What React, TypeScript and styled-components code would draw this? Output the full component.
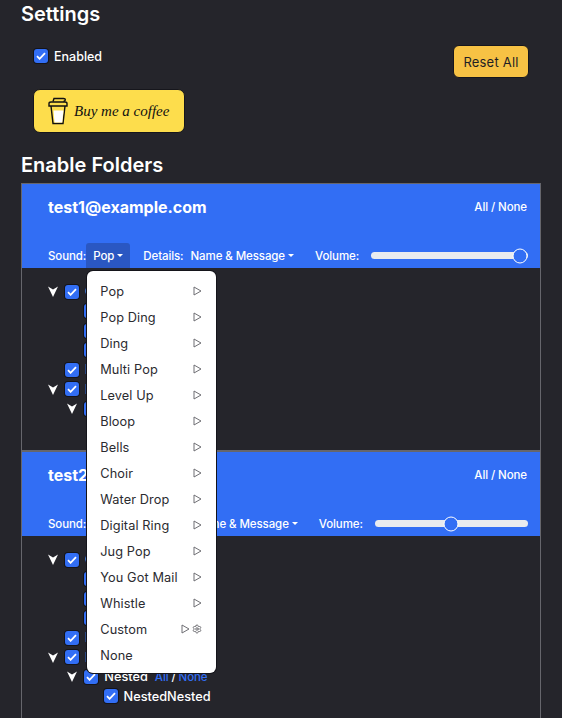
import React from 'react';
import styled, { createGlobalStyle } from 'styled-components';
import { Settings as GearIcon } from 'lucide-react';

const GlobalStyle = createGlobalStyle`
  html, body {
    margin: 0;
    padding: 0;
    height: 718px;
    overflow: hidden;
    background-color: #25252b;
  }
  body {
    font-family: Inter, "Liberation Sans", sans-serif;
    color: #fff;
    -webkit-font-smoothing: antialiased;
  }
`;

const Page = styled.div`
  padding: 2px 21px 0;
  height: 716px;
  overflow: hidden;
`;

const Heading = styled.h1`
  margin: 0;
  font-size: 20px;
  line-height: 24px;
  font-weight: 600;
`;

const SettingsRow = styled.div`
  display: flex;
  justify-content: space-between;
  align-items: flex-start;
  margin-top: 19px;
  padding: 0 12px 0 13px;
`;

const EnabledLabel = styled.label`
  display: flex;
  align-items: center;
  gap: 6px;
  height: 22px;
  font-size: 12.5px;
  font-weight: 500;
`;

const ResetButton = styled.button`
  width: 76px;
  height: 33px;
  padding: 0;
  border: 1px solid #16161c;
  border-radius: 6px;
  background-color: #f7c244;
  color: #1f1f24;
  font-family: inherit;
  font-size: 13px;
  letter-spacing: 0.2px;
`;

const CoffeeButton = styled.a`
  display: flex;
  align-items: center;
  gap: 6px;
  box-sizing: border-box;
  width: 152px;
  height: 44px;
  margin: 11px 0 0 12px;
  padding-left: 14px;
  border: 1px solid #16161c;
  border-radius: 7px;
  background-color: #fddd4c;
  color: #111;
  font-family: "Liberation Serif", serif;
  font-style: italic;
  font-size: 15px;
`;

const FoldersHeading = styled(Heading)`
  margin: 20px 0 6px;
`;

const Panel = styled.div`
  border: 1px solid #66666c;
  border-bottom: none;
  height: 600px;
`;

const AccountHeader = styled.div<{ $first?: boolean }>`
  height: 84px;
  padding: 0 13px 0 26px;
  background-color: #326ef4;
  border-top: ${(p) => (p.$first ? 'none' : '2px solid #66666c')};
  display: flex;
  flex-direction: column;
  font-size: 11.5px;
  font-weight: 500;
  letter-spacing: -0.1px;
`;

const TitleRow = styled.div`
  display: flex;
  justify-content: space-between;
  align-items: center;
  height: 46px;
`;

const AccountTitle = styled.span`
  font-size: 16px;
  font-weight: 700;
  letter-spacing: 0;
`;

const AllNone = styled.span`
  font-size: 11.5px;
`;

const ControlRow = styled.div`
  display: flex;
  align-items: center;
  height: 25px;
  margin-top: 13px;
`;

const DropdownWrap = styled.div`
  position: relative;
  margin: 0 13px 0 0;
`;

const DropdownButton = styled.div<{ $open?: boolean }>`
  display: flex;
  align-items: center;
  gap: 3px;
  height: 25px;
  padding: 0 ${(p) => (p.$open ? '7px' : '0')};
  border-radius: 3px 3px 0 0;
  background-color: ${(p) => (p.$open ? '#2a57c2' : 'transparent')};
  white-space: nowrap;
`;

const DetailsValue = styled(DropdownButton)`
  margin: 0 21px 0 7px;
`;

const Caret = styled.span`
  width: 0;
  height: 0;
  border-left: 3.5px solid transparent;
  border-right: 3.5px solid transparent;
  border-top: 3.5px solid #fff;
`;

const Track = styled.div`
  position: relative;
  flex: 1;
  height: 7px;
  margin: 0 -1px 0 12px;
  border-radius: 4px;
  background-color: #e9ebef;
`;

const Thumb = styled.span`
  position: absolute;
  top: 50%;
  width: 13px;
  height: 13px;
  transform: translate(-50%, -50%);
  border: 1.5px solid #fff;
  border-radius: 50%;
  background-color: #326ef4;
`;

const Tree = styled.div<{ $bottom: number }>`
  padding: 14px 0 ${(p) => p.$bottom}px 24px;
`;

const Row = styled.div<{ $level: number }>`
  display: flex;
  align-items: center;
  height: 19.5px;
  padding-left: ${(p) => p.$level * 19.25}px;
  font-size: 12.75px;
  font-weight: 500;
`;

const ArrowSlot = styled.span`
  display: flex;
  align-items: center;
  width: 19px;
  padding-left: 2px;
  box-sizing: border-box;
`;

const Box = styled.span`
  display: flex;
  align-items: center;
  justify-content: center;
  flex: none;
  box-sizing: border-box;
  width: 14px;
  height: 14px;
  border-radius: 3px;
  background-color: #326ef4;
  box-shadow: 0 0 0 1px #14141a;
`;

const RowLabel = styled.span`
  margin-left: 6px;
`;

const BlueLinks = styled.span`
  margin-left: 7px;
  font-size: 11.5px;
  letter-spacing: -0.1px;
  color: #326ef4;
`;

const Slash = styled.span`
  color: #fff;
`;

const Menu = styled.div`
  position: absolute;
  z-index: 10;
  top: 28px;
  left: 1px;
  box-sizing: border-box;
  width: 129px;
  padding: 7px 0 5px;
  border-radius: 6px;
  background-color: #fff;
  box-shadow: 0 0 0 1px #14141a;
  color: #2b2b30;
  font-size: 12.75px;
  font-weight: 400;
  letter-spacing: 0.1px;
`;

const MenuItem = styled.div`
  display: flex;
  align-items: center;
  justify-content: space-between;
  height: 26px;
  padding: 0 14px 0 13px;
`;

const MenuIcons = styled.span`
  display: flex;
  align-items: center;
  gap: 2px;
  color: #6f6f74;
`;

const Check = () => (
  <svg width="10" height="8" viewBox="0 0 10 8" fill="none">
    <path d="M1 4.2 3.6 6.8 9 1.2" stroke="#fff" strokeWidth="1.8" />
  </svg>
);

const Arrow = () => (
  <svg width="10" height="11" viewBox="0 0 10 11" fill="#fff">
    <path d="M0 0.5 5 3.5 10 0.5 5 11Z" />
  </svg>
);

const PlayIcon = () => (
  <svg width="9" height="10" viewBox="0 0 9 10" fill="none">
    <path d="M1 1 8 5 1 9Z" stroke="currentColor" strokeWidth="1" strokeLinejoin="round" />
  </svg>
);

const Cup = () => (
  <svg width="20" height="28" viewBox="0 0 20 28" fill="none" stroke="#111" strokeWidth="1.4">
    <path d="M5 4.5 6 1.5H15.5C18 1.5 18 4 15.5 4.5" />
    <path d="M1 9V6.5C1 5.5 2 5 3 5H17C18 5 19 5.5 19 6.5V9Z" />
    <path d="M3 9 5 26.5H15L17 9" />
    <path d="M5.5 13.5H15.5L14.2 25.5H6.5Z" fill="#fff" stroke="none" />
  </svg>
);

const sounds = [
  'Pop', 'Pop Ding', 'Ding', 'Multi Pop', 'Level Up', 'Bloop', 'Bells', 'Choir',
  'Water Drop', 'Digital Ring', 'Jug Pop', 'You Got Mail', 'Whistle', 'Custom', 'None',
];

type Folder = { name: string; level: number; arrow?: boolean; links?: boolean };

const firstTree: Folder[] = [
  { name: 'Categories', level: 0, arrow: true },
  { name: 'Forums', level: 1 },
  { name: 'Social', level: 1 },
  { name: 'Updates', level: 1 },
  { name: 'Inbox', level: 0 },
  { name: 'Labels', level: 0, arrow: true },
  { name: 'Nested', level: 1, arrow: true },
];

const secondTree: Folder[] = [
  { name: 'Categories', level: 0, arrow: true },
  { name: 'Forums', level: 1 },
  { name: 'Social', level: 1 },
  { name: 'Updates', level: 1 },
  { name: 'Inbox', level: 0 },
  { name: 'Labels', level: 0, arrow: true },
  { name: 'Nested', level: 1, arrow: true, links: true },
  { name: 'NestedNested', level: 2 },
];

const FolderRows: React.FC<{ folders: Folder[] }> = ({ folders }) => (
  <>
    {folders.map((f) => (
      <Row key={f.name} $level={f.level}>
        <ArrowSlot>{f.arrow && <Arrow />}</ArrowSlot>
        <Box><Check /></Box>
        <RowLabel>{f.name}</RowLabel>
        {f.links && (
          <BlueLinks>All <Slash>/</Slash> None</BlueLinks>
        )}
      </Row>
    ))}
  </>
);

const SoundMenu: React.FC = () => (
  <Menu>
    {sounds.map((s) => (
      <MenuItem key={s}>
        {s}
        {s !== 'None' && (
          <MenuIcons>
            <PlayIcon />
            {s === 'Custom' && <GearIcon size={10} strokeWidth={2.4} />}
          </MenuIcons>
        )}
      </MenuItem>
    ))}
  </Menu>
);

const Account: React.FC<{
  email: string;
  sound: string;
  first?: boolean;
  volume: number;
  children?: React.ReactNode;
}> = ({ email, sound, first, volume, children }) => (
  <AccountHeader $first={first}>
    <TitleRow>
      <AccountTitle>{email}</AccountTitle>
      <AllNone>All / None</AllNone>
    </TitleRow>
    <ControlRow>
      Sound:
      <DropdownWrap>
        <DropdownButton $open>
          {sound}
          <Caret />
        </DropdownButton>
        {children}
      </DropdownWrap>
      Details:
      <DetailsValue>
        Name &amp; Message
        <Caret />
      </DetailsValue>
      Volume:
      <Track>
        <Thumb style={{ left: `${volume}%` }} />
      </Track>
    </ControlRow>
  </AccountHeader>
);

export default function App() {
  return (
    <Page>
      <GlobalStyle />
      <Heading>Settings</Heading>
      <SettingsRow>
        <EnabledLabel>
          <Box><Check /></Box>
          Enabled
        </EnabledLabel>
        <ResetButton>Reset All</ResetButton>
      </SettingsRow>
      <CoffeeButton>
        <Cup />
        Buy me a coffee
      </CoffeeButton>
      <FoldersHeading>Enable Folders</FoldersHeading>
      <Panel>
        <Account email="test1@example.com" sound="Pop" first volume={95}>
          <SoundMenu />
        </Account>
        <Tree $bottom={31.5}>
          <FolderRows folders={firstTree} />
        </Tree>
        <Account email="test2@example.com" sound="Ding" volume={50} />
        <Tree $bottom={0}>
          <FolderRows folders={secondTree} />
        </Tree>
      </Panel>
    </Page>
  );
}
